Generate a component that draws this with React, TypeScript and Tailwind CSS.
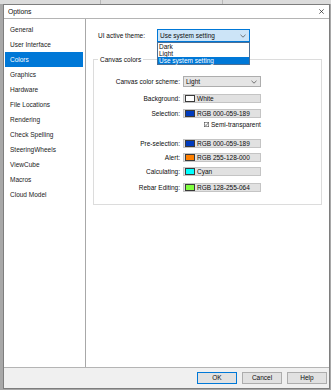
import React from "react";

const items = [
  "General",
  "User Interface",
  "Colors",
  "Graphics",
  "Hardware",
  "File Locations",
  "Rendering",
  "Check Spelling",
  "SteeringWheels",
  "ViewCube",
  "Macros",
  "Cloud Model",
];

function Chevron() {
  return (
    <svg width="6" height="4" viewBox="0 0 6 4" className="shrink-0">
      <path d="M0.5 0.8 L3 3.2 L5.5 0.8" fill="none" stroke="#555" strokeWidth="0.8" />
    </svg>
  );
}

function ColorField({ color, text }: { color: string; text: string }) {
  return (
    <div className="w-[78px] h-[9px] bg-[#e1e1e1] border border-[#c4c4c4] flex items-center pl-[1px] gap-[2px]">
      <div className="w-[10px] h-[7px] border border-[#3a3a3a]" style={{ backgroundColor: color }} />
      <span className="leading-[7px]">{text}</span>
    </div>
  );
}

function Row({ label, children, className }: { label: string; children: React.ReactNode; className: string }) {
  return (
    <div className={"flex items-center " + className}>
      <div className="w-[89px] text-right pr-[3px] leading-[8px]">{label}</div>
      {children}
    </div>
  );
}

export default function App() {
  return (
    <div
      className="w-[331px] h-[390px] bg-[#a8a8a8] flex flex-col overflow-hidden text-[6.5px] text-[#0c0c0c]"
      style={{ fontFamily: '"Liberation Sans", Arial, sans-serif' }}
    >
      <div className="h-[4px] bg-[#dcdcdc] flex shrink-0">
        <div className="w-[101px] border-r border-[#b8b8b8]" />
        <div className="w-[122px] border-r border-[#b8b8b8]" />
      </div>
      <div className="ml-[3px] w-[327px] h-[385px] border border-[#7e7e7e] bg-[#f0f0f0] flex flex-col shrink-0">
        {/* title bar */}
        <div className="h-[13px] bg-white flex items-center justify-between pl-[4px] pr-[5px] shrink-0">
          <span className="text-[6.8px] leading-[8px]">Options</span>
          <svg width="5" height="5" viewBox="0 0 5 5">
            <path d="M0.3 0.3 L4.7 4.7 M4.7 0.3 L0.3 4.7" stroke="#222" strokeWidth="0.7" />
          </svg>
        </div>
        {/* body */}
        <div className="h-[350px] flex border-t border-b border-[#b4b4b4] shrink-0">
          <div className="w-[82px] bg-white border-r border-[#a8a8a8] pt-[3px] pl-[1px] pr-[2px] flex flex-col">
            {items.map((it) => (
              <div
                key={it}
                className={
                  "h-[15px] flex items-center pl-[5px] leading-[8px] " +
                  (it === "Colors" ? "bg-[#0078d7] text-white" : "text-[#1a1a1a]")
                }
              >
                {it}
              </div>
            ))}
          </div>
          <div className="flex-1 bg-white pt-[10px] pl-[7px] flex flex-col">
            {/* theme row */}
            <div className="flex items-center h-[13px]">
              <span className="ml-[5px] w-[59px] leading-[8px]">UI active theme:</span>
              <div className="relative w-[93px] h-[13px]">
                <div className="w-full h-full bg-[#cce4f7] border border-[#0078d7] flex items-center justify-between pl-[2px] pr-[3px]">
                  <span className="leading-[8px]">Use system setting</span>
                  <Chevron />
                </div>
                <div className="absolute left-0 top-full w-[93px] bg-white border border-[#4a6f96] flex flex-col z-10">
                  <div className="h-[7px] leading-[7px] pl-[1px]">Dark</div>
                  <div className="h-[7px] leading-[7px] pl-[1px]">Light</div>
                  <div className="h-[7px] leading-[7px] pl-[1px] bg-[#0078d7] text-white">Use system setting</div>
                </div>
              </div>
            </div>
            {/* group */}
            <div className="relative mt-[17px] w-[229px] h-[146px] border border-[#dcdcdc] flex flex-col">
              <span className="absolute -top-[4px] left-[4px] bg-white px-[2px] leading-[8px]">Canvas colors</span>
              <Row label="Canvas color scheme:" className="mt-[16px]">
                <div className="w-[78px] h-[11px] bg-[#e5e5e5] border border-[#adadad] flex items-center justify-between pl-[2px] pr-[3px]">
                  <span className="leading-[8px]">Light</span>
                  <Chevron />
                </div>
              </Row>
              <Row label="Background:" className="mt-[7px]">
                <ColorField color="#ffffff" text="White" />
              </Row>
              <Row label="Selection:" className="mt-[6px]">
                <ColorField color="#003bbd" text="RGB 000-059-189" />
              </Row>
              <div className="flex items-center mt-[3px] ml-[110px] gap-[2px]">
                <svg width="5" height="5" viewBox="0 0 5 5">
                  <rect x="0.25" y="0.25" width="4.5" height="4.5" fill="white" stroke="#333" strokeWidth="0.5" />
                  <path d="M1 2.6 L2 3.6 L4 1.2" fill="none" stroke="#222" strokeWidth="0.6" />
                </svg>
                <span className="leading-[7px]">Semi-transparent</span>
              </div>
              <Row label="Pre-selection:" className="mt-[11px]">
                <ColorField color="#003bbd" text="RGB 000-059-189" />
              </Row>
              <Row label="Alert:" className="mt-[5px]">
                <ColorField color="#ff8000" text="RGB 255-128-000" />
              </Row>
              <Row label="Calculating:" className="mt-[5px]">
                <ColorField color="#00ffff" text="Cyan" />
              </Row>
              <Row label="Rebar Editing:" className="mt-[7px]">
                <ColorField color="#80ff40" text="RGB 128-255-064" />
              </Row>
            </div>
          </div>
        </div>
        {/* footer */}
        <div className="flex-1 flex justify-end items-start pt-[4px] pr-[2px] gap-[5px]">
          <button className="w-[40px] h-[12px] bg-[#e1e1e1] border border-[#0078d7] leading-[8px]">OK</button>
          <button className="w-[40px] h-[12px] bg-[#e1e1e1] border border-[#adadad] leading-[8px]">Cancel</button>
          <button className="w-[40px] h-[12px] bg-[#e1e1e1] border border-[#adadad] leading-[8px]">Help</button>
        </div>
      </div>
    </div>
  );
}
